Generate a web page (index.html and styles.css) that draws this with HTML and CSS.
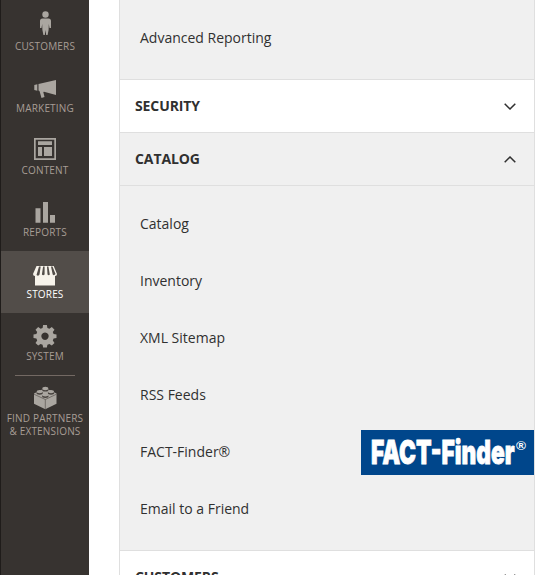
FILE: index.html
```
<!DOCTYPE html>
<html lang="en">
<head>
<meta charset="utf-8">
<title>Configuration</title>
<link rel="stylesheet" href="styles.css">
</head>
<body>
<nav class="menu">
  <a class="item"><svg class="icon" viewBox="0 0 26 26"><circle cx="13.5" cy="5.5" r="3.2"/><path d="M10.5 9.5h6q2.5 0 2.5 2.5v7h-1.5l-.7-4-.2 6-1 5h-1.4l-.7-5-.7 5h-1.4l-1-5-.2-6-.7 4H8v-7q0-2.500 2.500-2.500z"/></svg><span>CUSTOMERS</span></a>
  <a class="item"><svg class="icon" viewBox="0 0 26 26"><path d="M2.300 14l3-.7v6.400l-3-.7zM6.500 13L24 9v15L12 20.700l-.7.300 1.200 5-3 1-2-7-1-.4z"/></svg><span>MARKETING</span></a>
  <a class="item"><svg class="icon" viewBox="0 0 26 26"><path fill-rule="evenodd" d="M2 5h22v22H2zM3.700 6.700v18.600h18.600V6.700z"/><path d="M6 8.200h14V12H6zM6 14h4v9H6zM12 14h8v9h-8z"/></svg><span>CONTENT</span></a>
  <a class="item"><svg class="icon" viewBox="0 0 26 26"><path d="M3.500 13.300h5v14.400h-5zM11 7h5v20.700h-5zM18 20h5v7.700h-5z"/></svg><span>REPORTS</span></a>
  <a class="item active"><svg class="icon" viewBox="0 0 26 26"><path d="M4.500 9h17.200L25 17q0 2-2 2v9.500H3V19q-2 0-2-2z"/><path class="stripe" d="M7 9.500h1.700L7.500 17.500q-1 2-3 .500zM11.100 9.500h1.500v8q-1.500 1.500-2.700 0zM15 9.500h1.400l1.400 8q-1 1.500-2.300 0zM19 9.500h1.500l3 7.500q-1.500 2-2.800.5z"/></svg><span>STORES</span></a>
  <a class="item"><svg class="icon" viewBox="0 0 26 26"><path fill-rule="evenodd" d="M11.100 6h3.800l.5 3 2 .8 2.400-1.800 2.700 2.700-1.700 2.400.8 2 2.900.4v3.400l-2.900.5-.8 2 1.700 2.500-2.700 2.700-2.400-1.700-2 .8-.5 2.800h-3.800l-.5-2.800-2-.8-2.400 1.700-2.700-2.700 1.700-2.500-.8-2-2.900-.5v-3.400l2.900-.4.8-2-1.700-2.400L6.200 8l2.400 1.800 2-.8zM13 13.500a3.700 3.700 0 1 0 .01 0z"/></svg><span>SYSTEM</span></a>
  <a class="item partners"><svg class="icon" viewBox="0 0 26 26"><path d="M2 12.500L13.300 7 24.500 12.500v10.300L13.300 28.300 2 22.800z"/><path class="seam" d="M2 13.200l11.300 5.300 11.200-5.300M13.300 18.500v9.500"/><g class="shadow"><ellipse cx="13.300" cy="8.900" rx="3.200" ry="1.700"/><ellipse cx="7.700" cy="12" rx="3.200" ry="1.700"/><ellipse cx="19" cy="12" rx="3.200" ry="1.700"/><ellipse cx="13.300" cy="15.200" rx="3.200" ry="1.700"/></g><ellipse cx="13.300" cy="7.500" rx="3" ry="1.700"/><ellipse cx="7.700" cy="10.600" rx="3" ry="1.700"/><ellipse cx="19" cy="10.600" rx="3" ry="1.700"/><ellipse cx="13.300" cy="13.800" rx="3" ry="1.700"/></svg><span>FIND PARTNERS<br>&amp; EXTENSIONS</span></a>
</nav>
<main class="panel">
  <ul class="links upper"><li>Advanced Reporting</li></ul>
  <h2 class="head">SECURITY<svg class="chevron" viewBox="0 0 12 7"><path d="M.7.700L6 6 11.300.7"/></svg></h2>
  <h2 class="head open">CATALOG<svg class="chevron" viewBox="0 0 12 7"><path d="M.7 6.300L6 1l5.300 5.300"/></svg></h2>
  <ul class="links">
    <li>Catalog</li>
    <li>Inventory</li>
    <li>XML Sitemap</li>
    <li>RSS Feeds</li>
    <li class="brand">FACT-Finder®<svg class="logo" viewBox="0 0 173 45"><text class="word" x="10" y="34" textLength="143.500" lengthAdjust="spacingAndGlyphs">FACT-Finder</text><text class="mark" x="155" y="19.500" textLength="10" lengthAdjust="spacingAndGlyphs">®</text></svg></li>
    <li>Email to a Friend</li>
  </ul>
  <h2 class="head">CUSTOMERS<svg class="chevron" viewBox="0 0 12 7"><path d="M.7.700L6 6 11.300.7"/></svg></h2>
</main>
</body>
</html>
```
FILE: styles.css
```
* { box-sizing: border-box; }
body {
  margin: 0;
  height: 575px;
  overflow: hidden;
  display: flex;
  gap: 30px;
  background: #fff;
  color: #303030;
  font-family: "Open Sans", sans-serif;
}
.menu {
  width: 89px;
  height: 575px;
  padding-top: 3px;
  border-left: 1px solid #1f1c1a;
  background: #373330;
  flex: none;
}
.item {
  height: 62px;
  padding-top: 6px;
  display: flex;
  flex-direction: column;
  align-items: center;
  gap: 5px;
  color: #a79d95;
  font-size: 10px;
  line-height: 13px;
  letter-spacing: .18px;
  text-align: center;
  white-space: nowrap;
}
.icon {
  width: 26px;
  height: 26px;
  flex: none;
  overflow: visible;
  fill: #aaa6a0;
}
.active { background: #524d49; color: #fff; }
.active .icon { fill: #f7f3eb; }
.stripe { fill: #524d49; }
.partners {
  background: linear-gradient(#736963, #736963) center top / 60px 1px no-repeat;
}
.seam { fill: none; stroke: #5b5651; stroke-width: .7; }
.shadow { fill: #47423e; }
.panel {
  width: 416px;
  height: 575px;
  overflow: hidden;
  border: solid #dfdfdf;
  border-width: 0 1px;
  flex: none;
}
.links {
  margin: 0;
  padding: 9px 0 13px;
  list-style: none;
  background: #f0f0f0;
}
.links li {
  height: 57px;
  padding-left: 20px;
  display: flex;
  align-items: center;
  font-size: 14px;
}
.links.upper { height: 79px; }
.head {
  height: 53px;
  margin: 0;
  padding: 0 18px 2px 15px;
  display: flex;
  align-items: center;
  justify-content: space-between;
  border-top: 1px solid #dfdfdf;
  font-size: 14px;
  font-weight: 700;
  letter-spacing: -.1px;
}
.open { height: 54px; background: #f0f0f0; border-bottom: 1px solid #dfdfdf; }
.chevron {
  width: 12px;
  height: 7px;
  margin-top: 2px;
  fill: none;
  stroke: #303030;
  stroke-width: 1.5;
}
.brand { justify-content: space-between; }
.logo { width: 173px; height: 45px; margin-top: 2px; background: #00468b; }
.word {
  font: 900 33px Inter, sans-serif;
  fill: #fff;
  stroke: #fff;
  stroke-width: .8;
}
.mark { font: 700 12px "Liberation Sans", sans-serif; fill: #fff; }
```
